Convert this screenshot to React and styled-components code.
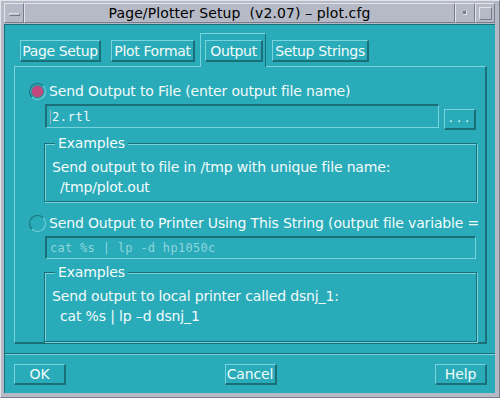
import React from "react"
import styled, { createGlobalStyle } from "styled-components"

const teal = "#2aabb9"
const light = "#78d3dc"
const dark = "#1a6f79"
const grey = "#b6bac6"
const greyLight = "#e2e4ea"
const greyDark = "#787c8a"

const GlobalStyle = createGlobalStyle`
  html, body {
    margin: 0;
    padding: 0;
    background: #ffffff;
  }
  body {
    font-family: "DejaVu Sans", "Liberation Sans", sans-serif;
  }
`

const Window = styled.div`
  width: 500px;
  height: 398px;
  box-sizing: border-box;
  background: ${grey};
  border-top: 1px solid ${greyLight};
  border-left: 1px solid ${greyLight};
  border-right: 1px solid ${greyDark};
  border-bottom: 1px solid ${greyDark};
  padding: 2px 4px 4px 3px;
  display: flex;
  flex-direction: column;
`

const TitleBar = styled.div`
  height: 20px;
  display: flex;
  flex-shrink: 0;
`

const FrameButton = styled.div`
  width: ${p => p.w}px;
  box-sizing: border-box;
  border-top: 1px solid ${greyLight};
  border-left: 1px solid ${greyLight};
  border-right: 1px solid ${greyDark};
  border-bottom: 1px solid ${greyDark};
  display: flex;
  align-items: center;
  justify-content: center;
`

const MenuBar = styled.div`
  width: 11px;
  height: 3px;
  box-sizing: border-box;
  border-top: 1px solid ${greyLight};
  border-left: 1px solid ${greyLight};
  border-right: 1px solid ${greyDark};
  border-bottom: 1px solid ${greyDark};
  margin-top: 2px;
`

const Dot = styled.div`
  width: 3px;
  height: 3px;
  background: ${greyDark};
  border-right: 1px solid ${greyLight};
  border-bottom: 1px solid ${greyLight};
`

const Square = styled.div`
  width: 13px;
  height: 13px;
  box-sizing: border-box;
  border-top: 1px solid ${greyLight};
  border-left: 1px solid ${greyLight};
  border-right: 1px solid ${greyDark};
  border-bottom: 1px solid ${greyDark};
`

const Title = styled(FrameButton)`
  flex: 1;
  font-size: 14px;
  color: #000;
  letter-spacing: 0.1px;
  white-space: pre;
`

const Body = styled.div`
  flex: 1;
  margin-top: 1px;
  background: ${teal};
  color: #f2fbfb;
  font-size: 14px;
  letter-spacing: -0.15px;
  display: flex;
  flex-direction: column;
  border-top: 1px solid ${dark};
  border-left: 1px solid ${dark};
`

const TabBar = styled.div`
  display: flex;
  align-items: flex-end;
  padding: 8px 0 0 15px;
  height: 33px;
`

const Tab = styled.div`
  width: ${p => p.w}px;
  height: 22px;
  box-sizing: border-box;
  margin: 0 ${p => p.gap || 0}px 4px 0;
  border-top: 1px solid ${light};
  border-left: 1px solid ${light};
  border-right: 2px solid ${dark};
  border-bottom: 2px solid ${dark};
  display: flex;
  align-items: center;
  justify-content: center;
  white-space: nowrap;
  letter-spacing: -0.35px;
`

const ActiveTab = styled.div`
  box-sizing: border-box;
  margin-right: 6px;
  padding: 6px 2px 0 4px;
  border-top: 1px solid ${light};
  border-left: 1px solid ${light};
  border-right: 1px solid ${dark};
  position: relative;
  z-index: 1;
  background: ${teal};
  margin-bottom: -1px;
  height: 34px;
`

const Panel = styled.div`
  margin: 0 8px 0 9px;
  height: 278px;
  box-sizing: border-box;
  border-top: 1px solid ${light};
  border-left: 1px solid ${light};
  border-right: 2px solid ${dark};
  border-bottom: 2px solid ${dark};
  padding: 16px 9px 0 14px;
  display: flex;
  flex-direction: column;
`

const RadioRow = styled.div`
  display: flex;
  align-items: center;
  height: 16px;
  margin-top: ${p => p.mt || 0}px;
  white-space: nowrap;
`

const Radio = styled.div`
  width: 17px;
  height: 17px;
  box-sizing: border-box;
  border-radius: 50%;
  border: 1px solid;
  border-color: ${dark} ${light} ${light} ${dark};
  margin-right: 3px;
  flex-shrink: 0;
  display: flex;
  align-items: center;
  justify-content: center;
`

const RadioDot = styled.div`
  width: 13px;
  height: 13px;
  box-sizing: border-box;
  border-radius: 50%;
  background: #c6477c;
  border: 1px solid #4c7f8a;
`

const FieldRow = styled.div`
  display: flex;
  align-items: flex-start;
  margin: 5px 0 0 16px;
`

const Field = styled.div`
  height: ${p => p.h}px;
  width: ${p => p.w}px;
  box-sizing: border-box;
  border-top: 2px solid ${dark};
  border-left: 2px solid ${dark};
  border-right: 1px solid ${light};
  border-bottom: 1px solid ${light};
  display: flex;
  align-items: center;
  padding-left: 3px;
  font-family: "DejaVu Sans Mono", "Liberation Mono", monospace;
  font-size: 12px;
  color: ${p => (p.disabled ? "#8fd5dc" : "#f2fbfb")};
  letter-spacing: ${p => (p.disabled ? "0.3px" : "0.6px")};
`

const Caret = styled.span`
  width: 1px;
  height: 14px;
  background: #9fb0b8;
  margin-right: 1px;
`

const SmallButton = styled.div`
  width: 32px;
  height: 21px;
  margin: 5px 0 0 5px;
  box-sizing: border-box;
  border-top: 1px solid ${light};
  border-left: 1px solid ${light};
  border-right: 2px solid ${dark};
  border-bottom: 2px solid ${dark};
  display: flex;
  align-items: flex-end;
  justify-content: center;
  padding: 0 0 4px 3px;
  font-size: 13px;
  letter-spacing: 4px;
  line-height: 1;
`

const Group = styled.div`
  position: relative;
  margin: ${p => p.mt}px 0 0 15px;
  width: 433px;
  height: ${p => p.h}px;
  box-sizing: border-box;
  border: 1px solid ${dark};
  box-shadow: inset 1px 1px 0 ${light}, 1px 1px 0 ${light};
  padding: 13px 0 0 7px;
  line-height: 20px;
`

const Legend = styled.span`
  position: absolute;
  top: -11px;
  left: 10px;
  padding: 0 3px;
  background: ${teal};
  line-height: 20px;
`

const Line = styled.div`
  padding-left: ${p => p.indent || 0}px;
  white-space: pre;
`

const Separator = styled.div`
  margin-top: 9px;
  border-top: 1px solid ${dark};
  border-bottom: 1px solid ${light};
`

const ButtonRow = styled.div`
  display: flex;
  justify-content: space-between;
  padding: 9px 8px 0 9px;
`

const Button = styled.div`
  width: 52px;
  height: 21px;
  box-sizing: border-box;
  border-top: 1px solid ${light};
  border-left: 1px solid ${light};
  border-right: 2px solid ${dark};
  border-bottom: 2px solid ${dark};
  display: flex;
  align-items: center;
  justify-content: center;
`

const tabs = [
  { label: "Page Setup", w: 81, gap: 10 },
  { label: "Plot Format", w: 84, gap: 5 }
]

export default function App() {
  return (
    <>
      <GlobalStyle />
      <Window>
        <TitleBar>
          <FrameButton w={20}>
            <MenuBar />
          </FrameButton>
          <Title>Page/Plotter Setup  (v2.07) – plot.cfg</Title>
          <FrameButton w={20}>
            <Dot />
          </FrameButton>
          <FrameButton w={20}>
            <Square />
          </FrameButton>
        </TitleBar>
        <Body>
          <TabBar>
            {tabs.map(t => (
              <Tab key={t.label} w={t.w} gap={t.gap}>
                {t.label}
              </Tab>
            ))}
            <ActiveTab>
              <Tab w={58}>Output</Tab>
            </ActiveTab>
            <Tab w={97}>Setup Strings</Tab>
          </TabBar>
          <Panel>
            <RadioRow>
              <Radio>
                <RadioDot />
              </Radio>
              Send Output to File (enter output file name)
            </RadioRow>
            <FieldRow>
              <Field w={396} h={24}>
                <Caret />
                2.rtl
              </Field>
              <SmallButton>...</SmallButton>
            </FieldRow>
            <Group mt={13} h={59}>
              <Legend>Examples</Legend>
              <Line>Send output to file in /tmp with unique file name:</Line>
              <Line indent={8}>/tmp/plot.out</Line>
            </Group>
            <RadioRow mt={13}>
              <Radio />
              Send Output to Printer Using This String (output file variable =
            </RadioRow>
            <FieldRow>
              <Field w={432} h={23} disabled>
                cat %s | lp -d hp1050c
              </Field>
            </FieldRow>
            <Group mt={13} h={70}>
              <Legend>Examples</Legend>
              <Line>Send output to local printer called dsnj_1:</Line>
              <Line indent={8}>cat %s | lp –d dsnj_1</Line>
            </Group>
          </Panel>
          <Separator />
          <ButtonRow>
            <Button>OK</Button>
            <Button>Cancel</Button>
            <Button>Help</Button>
          </ButtonRow>
        </Body>
      </Window>
    </>
  )
}
